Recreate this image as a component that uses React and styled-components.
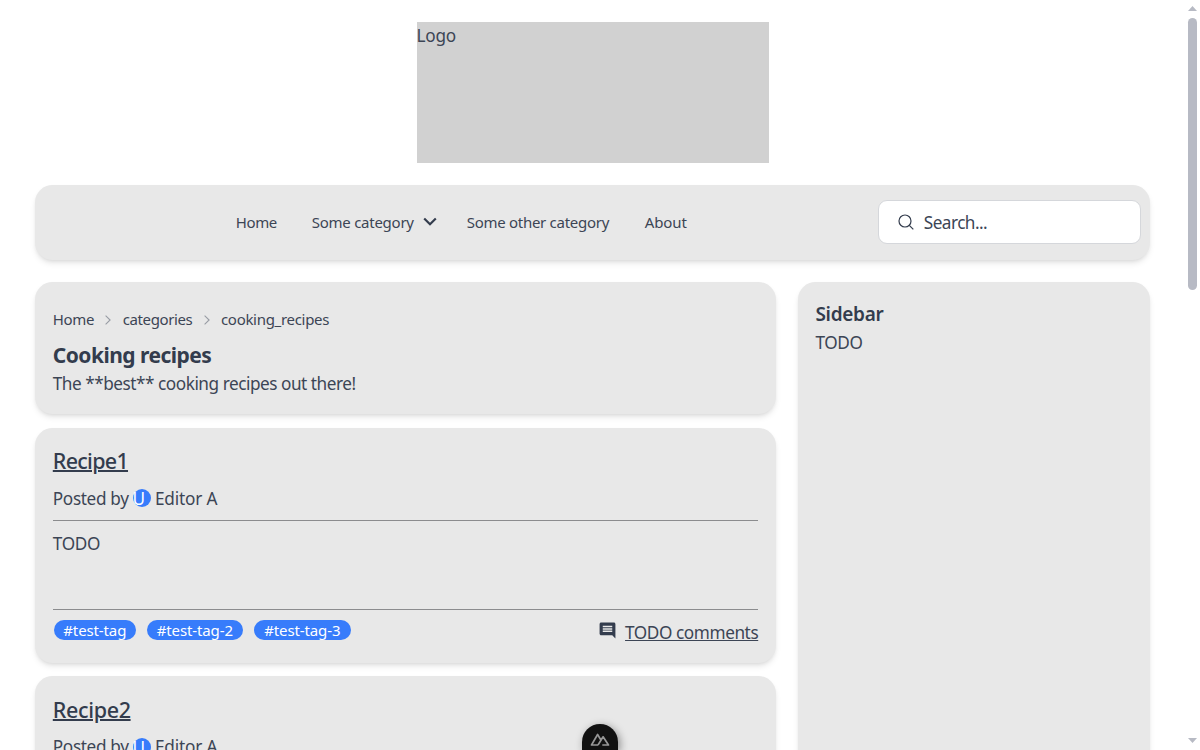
import React from "react";
import styled, { createGlobalStyle } from "styled-components";

const GlobalStyle = createGlobalStyle`
  *, *::before, *::after { box-sizing: border-box; }
  html { font-size: 17.6px; }
  body {
    margin: 0;
    height: 750px;
    overflow: hidden;
    background: #fff;
    color: #3c4555;
    font-family: "Segoe UI", "Noto Sans", sans-serif;
    line-height: 26.4px;
  }
  h1, h2, p { margin: 0; font-size: inherit; color: #333c4d; }
  p { color: inherit; }
  a { color: inherit; }
`;

const Window = styled.div`
  display: flex;
  width: 1200px;
  height: 750px;
  overflow: hidden;
`;

const Page = styled.div`
  flex: 1;
  display: flex;
  flex-direction: column;
  align-items: center;
  padding: 22px 2rem 0;
  min-width: 0;
`;

const Text = styled.span`
  white-space: pre;
  font-size: ${(p) => p.$size || 17.2}px;
  font-weight: ${(p) => p.$weight || 400};
  letter-spacing: ${(p) => p.$track || 0}px;
`;

const Logo = styled.div`
  flex: none;
  width: 20rem;
  height: 8rem;
  background: #d1d1d1;
`;

const Navbar = styled.nav`
  flex: none;
  display: flex;
  align-items: center;
  width: 100%;
  height: 75.4px;
  margin: 22px 0 21.8px;
  padding: 0 9px 1px 0;
  border-radius: 1rem;
  background: #e8e8e8;
  box-shadow: 0 4px 6px -1px rgba(0, 0, 0, 0.1), 0 2px 4px -2px rgba(0, 0, 0, 0.1);
`;

const Menu = styled.div`
  flex: 1;
  display: flex;
  align-items: center;
  padding-left: 200.5px;
`;

const MenuItem = styled.a`
  display: flex;
  align-items: center;
  width: ${(p) => p.$width}px;
`;

const Chevron = styled.svg`
  width: 14px;
  height: 9px;
  margin: 0 0 0 9px;
`;

const Search = styled.div`
  display: flex;
  align-items: center;
  gap: 10px;
  width: 263px;
  height: 44px;
  padding: 2px 0 0 19px;
  border: 1px solid #d5d7db;
  border-radius: 9px;
  background: #fff;
`;

const SearchIcon = styled.svg`
  width: 16px;
  height: 16px;
  margin-bottom: 2px;
`;

const Columns = styled.div`
  display: flex;
  align-items: flex-start;
  gap: 22px;
  width: 100%;
`;

const Main = styled.main`
  flex: 1;
  display: flex;
  flex-direction: column;
  gap: 13.4px;
`;

const Card = styled.section`
  height: ${(p) => p.$height}px;
  padding: 1rem;
  border-radius: 1rem;
  background: #e8e8e8;
  box-shadow: 0 4px 6px -1px rgba(0, 0, 0, 0.1), 0 2px 4px -2px rgba(0, 0, 0, 0.1);
`;

const Sidebar = styled(Card)`
  flex: none;
  width: 20rem;
`;

const SidebarTitle = styled.h2`
  height: 29.5px;
  line-height: 29px;
`;

const Breadcrumbs = styled.div`
  display: flex;
  align-items: center;
  height: 41px;
  padding-bottom: 1px;
`;

const CrumbArrow = styled.svg`
  width: 6px;
  height: 10px;
  margin: 0 11.3px 0 11.3px;
`;

const CardTitle = styled.h1`
  height: 29.4px;
  line-height: 29px;
`;

const RecipeTitle = styled.h2`
  height: 40px;
  line-height: 32px;
`;

const TitleLink = styled(Text)`
  text-decoration: underline;
  text-decoration-thickness: 2px;
`;

const Byline = styled.div`
  display: flex;
  align-items: center;
  height: 26px;
`;

const BylineText = styled(Text)`
  padding-top: 1.6px;
`;

const Avatar = styled.span`
  width: 18px;
  height: 18px;
  margin: 0 4.3px 0 4px;
  border-radius: 50%;
  background: #377cfb;
  color: #fff;
  line-height: 18px;
`;

const Body = styled.div`
  height: 90px;
  margin-top: 8.8px;
  padding-top: 9px;
  border-top: 1px solid #8b8c8e;
  border-bottom: 1px solid #8b8c8e;
`;

const Footer = styled.div`
  display: flex;
  align-items: flex-start;
  padding: 9px 0 0 1px;
`;

const Tag = styled.span`
  display: flex;
  justify-content: center;
  align-items: center;
  width: ${(p) => p.$width}px;
  height: 20px;
  margin: 1px 11px 0 0;
  border-radius: 10px;
  background: #377cfb;
  color: #fff;
  line-height: 20px;
`;

const Comments = styled.a`
  display: flex;
  gap: 10px;
  margin-left: auto;
`;

const CommentLabel = styled(Text)`
  padding-top: 0.8px;
  text-decoration: underline;
`;

const CommentIcon = styled.svg`
  width: 19px;
  height: 19px;
  margin: 1.6px -1.8px 0 0;
`;

const Scrollbar = styled.div`
  flex: none;
  display: flex;
  flex-direction: column;
  align-items: center;
  width: 15px;
  padding: 6px 0 7px 0;
`;

const Arrow = styled.svg`
  width: 9px;
  height: 5px;
`;

const Thumb = styled.div`
  width: 9px;
  height: 272px;
  margin: 7px 0 auto;
  border-radius: 5px;
  background: #b7bac4;
`;

const DevBadge = styled.div`
  position: absolute;
  left: 582px;
  top: 724px;
  display: flex;
  justify-content: center;
  width: 36px;
  height: 26px;
  padding-top: 9px;
  border-radius: 18px 18px 0 0;
  background: #111;
  box-shadow: 2px 2px 8px rgba(0, 0, 0, 0.4);
`;

function Separator() {
  return (
    <CrumbArrow viewBox="0 0 6 10" fill="none" stroke="#989ca4" strokeWidth="1.1">
      <path d="M.6.6 5.1 5 .6 9.4" />
    </CrumbArrow>
  );
}

const tags = [
  { name: "#test-tag", width: 82 },
  { name: "#test-tag-2", width: 96 },
  { name: "#test-tag-3", width: 97 },
];

function Recipe({ title, track }) {
  return (
    <Card $height={235}>
      <RecipeTitle><TitleLink $size={21.5} $weight={500} $track={track}>{title}</TitleLink></RecipeTitle>
      <Byline>
        <BylineText $track={-0.35}>Posted by</BylineText>
        <Avatar><Text>U</Text></Avatar>
        <BylineText $track={-0.15}>Editor A</BylineText>
      </Byline>
      <Body><Text $track={-0.35}>TODO</Text></Body>
      <Footer>
        {tags.map((t) => (
          <Tag key={t.name} $width={t.width}><Text $size={15} $track={-0.12}>{t.name}</Text></Tag>
        ))}
        <Comments>
          <CommentIcon viewBox="0 0 24 24" fill="#333c4d">
            <path d="M21.99 4c0-1.1-.89-2-1.99-2H4c-1.1 0-2 .9-2 2v12c0 1.1.9 2 2 2h14l4 4zM18 14H6v-2h12zm0-3H6V9h12zm0-3H6V6h12z" />
          </CommentIcon>
          <CommentLabel $track={-0.42}>TODO comments</CommentLabel>
        </Comments>
      </Footer>
    </Card>
  );
}

export default function App() {
  return (
    <Window>
      <GlobalStyle />
      <Page>
        <Logo><Text $track={-0.25}>Logo</Text></Logo>
        <Navbar>
          <Menu>
            <MenuItem $width={76}><Text $size={15} $track={-0.35}>Home</Text></MenuItem>
            <MenuItem $width={155}>
              <Text $size={15} $track={-0.25}>Some category</Text>
              <Chevron viewBox="0 0 14 9" fill="none" stroke="#333c4d" strokeWidth="2.2">
                <path d="M1.2 1.5 7 7.2l5.8-5.7" />
              </Chevron>
            </MenuItem>
            <MenuItem $width={178}><Text $size={15} $track={-0.28}>Some other category</Text></MenuItem>
            <MenuItem $width={60}><Text $size={15} $track={-0.1}>About</Text></MenuItem>
          </Menu>
          <Search>
            <SearchIcon viewBox="0 0 16 16" fill="none" stroke="#333c4d" strokeWidth="1.2">
              <circle cx="7" cy="7" r="6" />
              <path d="m11.3 11.3 4 4" />
            </SearchIcon>
            <Text $track={-0.55}>Search...</Text>
          </Search>
        </Navbar>
        <Columns>
          <Main>
            <Card $height={132.5}>
              <Breadcrumbs>
                <Text $size={15} $track={-0.35}>Home</Text>
                <Separator />
                <Text $size={15} $track={-0.38}>categories</Text>
                <Separator />
                <Text $size={15} $track={-0.3}>cooking_recipes</Text>
              </Breadcrumbs>
              <CardTitle><Text $size={21} $weight={700} $track={-0.53}>Cooking recipes</Text></CardTitle>
              <p><Text $track={-0.47}>The **best** cooking recipes out there!</Text></p>
            </Card>
            <Recipe title="Recipe1" track={-0.72} />
            <Recipe title="Recipe2" track={-0.35} />
          </Main>
          <Sidebar $height={900}>
            <SidebarTitle><Text $size={19} $weight={600} $track={-0.3}>Sidebar</Text></SidebarTitle>
            <p><Text $track={-0.35}>TODO</Text></p>
          </Sidebar>
        </Columns>
      </Page>
      <Scrollbar>
        <Arrow viewBox="0 0 9 5" fill="#b7bac4"><path d="M4.5 0 9 5H0z" /></Arrow>
        <Thumb />
        <Arrow viewBox="0 0 9 5" fill="#b7bac4"><path d="M0 0h9L4.5 5z" /></Arrow>
      </Scrollbar>
      <DevBadge>
        <svg width="20" height="14" viewBox="0 0 20 14" fill="none" stroke="#969696" strokeWidth="1.7" strokeLinejoin="round">
          <path d="M8 12H1.5L7.6 1.5l3 5M8 12l5.1-8.2L18.5 12h-6.2" />
        </svg>
      </DevBadge>
    </Window>
  );
}
